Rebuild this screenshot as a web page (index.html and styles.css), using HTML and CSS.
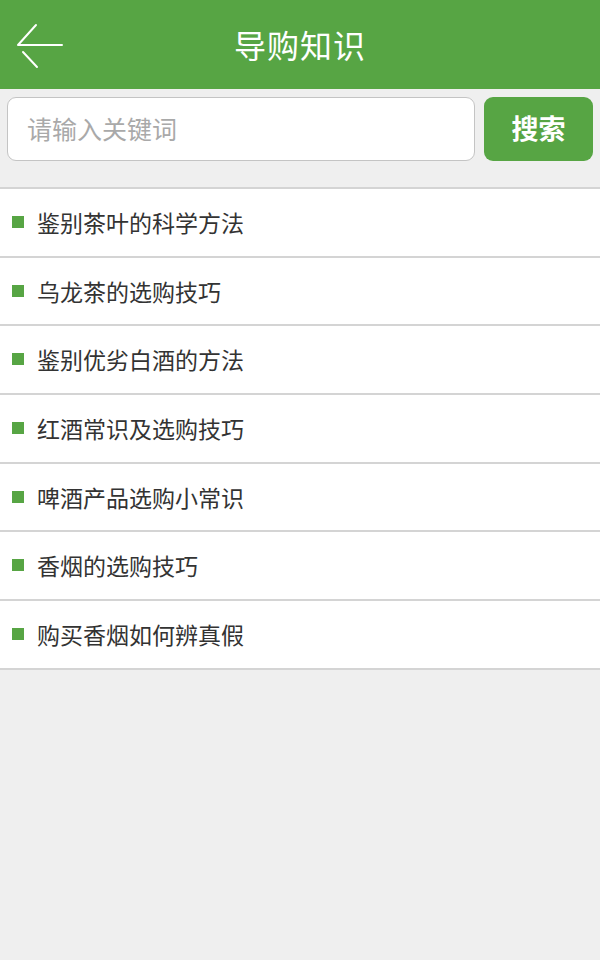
FILE: index.html
```html
<!DOCTYPE html>
<html lang="zh">
<head>
<meta charset="utf-8">
<title>导购知识</title>
<link rel="stylesheet" href="styles.css">
</head>
<body>
<header class="topbar">
  <svg class="back" width="50" height="50" viewBox="0 0 50 50">
    <path d="M47 24 H3 M3 24 L21 4 M8 31 L22 46" stroke="#fff" stroke-width="2" fill="none" stroke-linecap="round"/>
  </svg>
  <h1 class="title">导购知识</h1>
</header>
<div class="search">
  <div class="input">请输入关键词</div>
  <button class="btn">搜索</button>
</div>
<ul class="list">
  <li class="item"><span class="dot"></span>鉴别茶叶的科学方法</li>
  <li class="item"><span class="dot"></span>乌龙茶的选购技巧</li>
  <li class="item"><span class="dot"></span>鉴别优劣白酒的方法</li>
  <li class="item"><span class="dot"></span>红酒常识及选购技巧</li>
  <li class="item"><span class="dot"></span>啤酒产品选购小常识</li>
  <li class="item"><span class="dot"></span>香烟的选购技巧</li>
  <li class="item"><span class="dot"></span>购买香烟如何辨真假</li>
</ul>
</body>
</html>
```
FILE: styles.css
```css
html, body {
  margin: 0;
  padding: 0;
  background: #efefef;
  font-family: "Noto Sans CJK SC", "Noto Sans", sans-serif;
  width: 600px;
  height: 960px;
  overflow: hidden;
}
.topbar {
  position: relative;
  height: 89px;
  background: #57a544;
  display: flex;
  align-items: center;
  justify-content: center;
}
.back {
  position: absolute;
  left: 15px;
  top: 21px;
}
.title {
  margin: 0 0 2px 0;
  color: #fff;
  font-size: 32px;
  font-weight: 400;
  letter-spacing: 1px;
}
.search {
  display: flex;
  gap: 9px;
  padding: 8px 7px 0 7px;
  height: 64px;
}
.input {
  flex: 1;
  box-sizing: border-box;
  height: 64px;
  background: #fff;
  border: 1.5px solid #c4c4c4;
  border-radius: 9px;
  color: #a9a9a9;
  font-size: 25px;
  display: flex;
  align-items: center;
  padding-left: 19px;
  padding-bottom: 3px;
}
.btn {
  width: 109px;
  height: 64px;
  border: none;
  border-radius: 9px;
  background: #57a544;
  color: #fff;
  font-family: inherit;
  font-size: 27px;
  font-weight: 700;
  padding: 0 0 3px 0;
}
.list {
  list-style: none;
  margin: 26px 0 0 0;
  padding: 0;
  background: #fff;
  border-top: 2px solid #d4d4d4;
}
.item {
  height: 66.7px;
  border-bottom: 2px solid #d4d4d4;
  display: flex;
  align-items: center;
  font-size: 23px;
  color: #333;
  padding-bottom: 1px;
  box-sizing: content-box;
}
.item {
  height: 65.7px;
}
.dot {
  width: 12px;
  height: 12px;
  background: #57a544;
  margin-left: 12px;
  margin-right: 13px;
}
```
